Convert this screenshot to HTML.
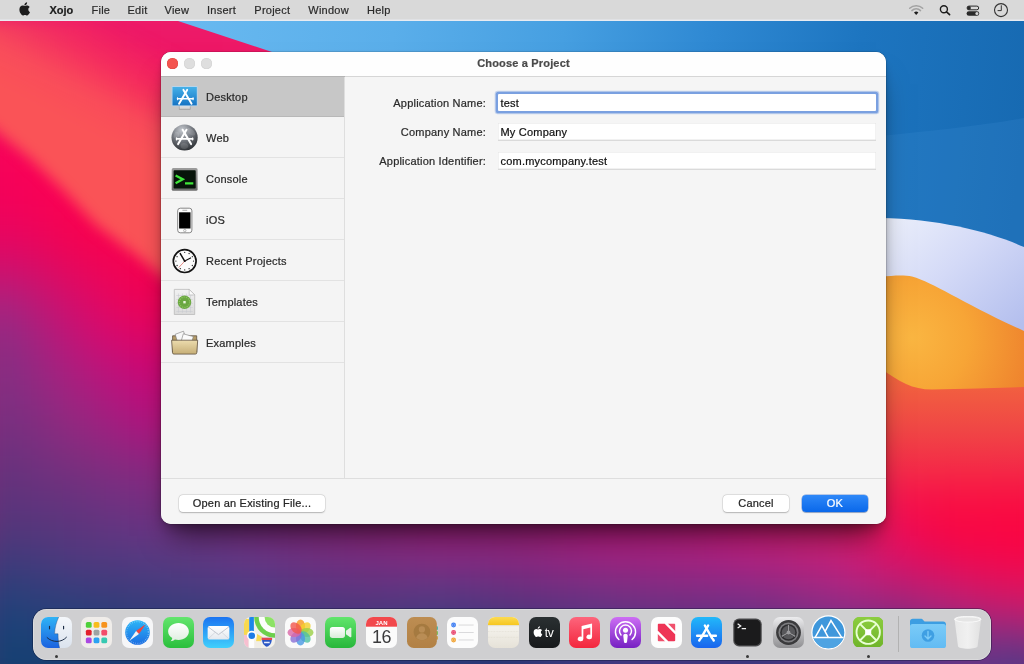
<!DOCTYPE html>
<html lang="en">
<head>
<meta charset="utf-8">
<title>Choose a Project</title>
<style>
*{box-sizing:border-box;margin:0;padding:0}
html,body{width:1024px;height:664px;overflow:hidden;background:#5a3585}
body{font-family:"Liberation Sans",sans-serif;font-size:11.5px;color:#262626;position:relative;-webkit-font-smoothing:antialiased}
#wall{position:absolute;left:0;top:0;width:1024px;height:664px;display:block}
/* ---------- menu bar ---------- */
#menubar{will-change:transform;position:absolute;left:0;top:0;width:1024px;height:20.5px;background:#d9d9d9;box-shadow:inset 0 -1.5px 0 rgba(236,240,248,.75)}
#menubar .mi{position:absolute;top:0;height:20px;line-height:20px;font-size:11px;color:#2a2a2a;white-space:nowrap}
#menubar .mi{letter-spacing:.25px;-webkit-text-stroke:.2px}#menubar .mi.b{font-weight:bold;color:#1c1c1c;letter-spacing:0}
#menubar svg{position:absolute}
/* ---------- dialog ---------- */
#dlg{will-change:transform;letter-spacing:.2px;-webkit-text-stroke:.22px;position:absolute;left:161px;top:52px;width:725px;height:472px;border-radius:10px;background:#f5f5f5;overflow:hidden;
 box-shadow:0 0 0 0.5px rgba(0,0,0,.22),0 22px 28px -10px rgba(0,0,0,.55),0 8px 14px -4px rgba(0,0,0,.25),0 1px 5px rgba(0,0,0,.12)}
#tb{position:absolute;z-index:2;left:0;top:0;width:725px;height:25px;background:#fefefe;border-bottom:1px solid #d6d6d6}
#tb .t{position:absolute;left:0;width:725px;top:0;height:24px;line-height:23px;text-align:center;font-weight:bold;font-size:11px;letter-spacing:.17px;color:#4a4a4a}
.tl{position:absolute;top:6.2px;width:10.6px;height:10.6px;border-radius:50%}
#side{position:absolute;left:0;top:24px;width:184px;height:402px;background:#f4f4f4;border-right:1px solid #dedede}
.row{position:absolute;left:0;width:183px;height:41px;border-bottom:1px solid #e2e2e2}
.row.sel{background:#c7c7c7;border-bottom-color:#b8b8b8}
#selt{position:absolute;z-index:3;left:0;top:24px;width:184px;height:1px;background:#b4b4b4}
.row span{position:absolute;left:45px;top:0;line-height:42px;font-size:11px;color:#2b2b2b;white-space:nowrap}
.row svg{position:absolute}
#main{position:absolute;left:184px;top:24px;width:541px;height:402px;background:#f5f5f5}
.lbl{position:absolute;right:400px;height:17px;line-height:17px;font-size:11px;color:#2b2b2b;white-space:nowrap;text-align:right}
.fld{position:absolute;left:336.5px;width:378px;height:16.5px;background:#fff;line-height:18.5px;font-size:11px;color:#111;padding-left:3px;white-space:nowrap;
 box-shadow:inset 0 0 0 0.5px #e4e4e4,0 1px 0 #dadada}
.fld.f{border-radius:1px;box-shadow:0 0 0 2.3px #7aa0e0,0 0 0 3.3px rgba(122,160,224,.4)}
#foot{position:absolute;left:0;top:426px;width:725px;height:46px;background:#f5f5f5;border-top:1px solid #dedede}
.btn{position:absolute;top:16px;height:17px;line-height:17px;border-radius:4px;background:#fff;text-align:center;font-size:11px;color:#262626;
 box-shadow:0 0 0 0.5px rgba(0,0,0,.12),0 .5px 1.5px rgba(0,0,0,.22)}
.btn.ok{background:linear-gradient(#2e88f8,#0a68ea);color:#fff;box-shadow:0 0 0 0.5px rgba(0,70,190,.5),0 1px 1px rgba(0,0,0,.2)}
/* ---------- dock ---------- */
#dock{position:absolute;left:33.2px;top:609px;width:957.5px;height:51px;border-radius:13.5px;background:#cfcfd1;
 box-shadow:0 0 0 0.8px rgba(10,20,50,.5),inset 0 0 0 0.6px rgba(255,255,255,.45)}
.di{position:absolute;will-change:transform}
.di svg{display:block;width:33px;height:33px}
.dot{position:absolute;top:655px;width:3px;height:3px;border-radius:50%;background:#3a3a3a}
#dsep{position:absolute;left:898px;top:616px;width:1px;height:36px;background:#b2b2b2}
</style>
</head>
<body>
<!-- WALLPAPER -->
<svg id="wall" viewBox="0 0 1024 664">
<defs>
<radialGradient id="gbase" gradientUnits="userSpaceOnUse" cx="0" cy="0" r="500" gradientTransform="translate(0 700) scale(2.5 1)">
 <stop offset="0" stop-color="#143869"/>
 <stop offset="0.2" stop-color="#203f79"/>
 <stop offset="0.36" stop-color="#503886"/>
 <stop offset="0.5" stop-color="#6e3087"/>
 <stop offset="0.68" stop-color="#9a2585"/>
 <stop offset="0.84" stop-color="#e4106a"/>
 <stop offset="1" stop-color="#f3084f"/>
</radialGradient>
<radialGradient id="gred" gradientUnits="userSpaceOnUse" cx="0" cy="0" r="1" gradientTransform="translate(1040 495) scale(330 120)">
 <stop offset="0" stop-color="#f9073f"/>
 <stop offset="0.45" stop-color="#f5104a" stop-opacity=".9"/>
 <stop offset="1" stop-color="#f5104a" stop-opacity="0"/>
</radialGradient>
<linearGradient id="gblue" gradientUnits="userSpaceOnUse" x1="180" y1="30" x2="1024" y2="120">
 <stop offset="0" stop-color="#68b9f0"/>
 <stop offset="0.25" stop-color="#5aaeea"/>
 <stop offset="0.45" stop-color="#469fe1"/>
 <stop offset="0.62" stop-color="#2f89d3"/>
 <stop offset="0.8" stop-color="#1d75c0"/>
 <stop offset="1" stop-color="#176ab2"/>
</linearGradient>
<linearGradient id="gwhite" gradientUnits="userSpaceOnUse" x1="900" y1="215" x2="1010" y2="335">
 <stop offset="0" stop-color="#eaeefb"/>
 <stop offset="0.45" stop-color="#d4daf7"/>
 <stop offset="1" stop-color="#b4bfee"/>
</linearGradient>
<radialGradient id="gor" gradientUnits="userSpaceOnUse" cx="912" cy="338" r="125">
 <stop offset="0" stop-color="#fab642"/>
 <stop offset="0.45" stop-color="#f7a536"/>
 <stop offset="1" stop-color="#ee812d"/>
</radialGradient>
<linearGradient id="gredr" gradientUnits="userSpaceOnUse" x1="0" y1="372" x2="0" y2="500">
 <stop offset="0" stop-color="#f2683e"/>
 <stop offset="0.45" stop-color="#f04645"/>
 <stop offset="1" stop-color="#f5104a" stop-opacity="0"/>
</linearGradient>
<linearGradient id="gsal" gradientUnits="userSpaceOnUse" x1="110" y1="20" x2="60" y2="115">
 <stop offset="0" stop-color="#f9535a" stop-opacity="0"/>
 <stop offset="0.35" stop-color="#f9535a" stop-opacity=".38"/>
 <stop offset="0.7" stop-color="#f9535a" stop-opacity=".9"/>
 <stop offset="1" stop-color="#fa5357" stop-opacity="1"/>
</linearGradient>
<filter id="bw" color-interpolation-filters="sRGB" x="-10%" y="-10%" width="120%" height="120%"><feGaussianBlur stdDeviation="18"/></filter>
<filter id="b30" color-interpolation-filters="sRGB" x="-50%" y="-50%" width="200%" height="200%"><feGaussianBlur stdDeviation="22"/></filter>
<filter id="b12" color-interpolation-filters="sRGB" x="-50%" y="-50%" width="200%" height="200%"><feGaussianBlur stdDeviation="7"/></filter>
</defs>
<rect width="1024" height="664" fill="#f00350"/>
<g filter="url(#bw)">
<rect x="-32" y="-32" width="33" height="33" fill="#e81e6a"/>
<rect x="0" y="-32" width="33" height="33" fill="#e91d6a"/>
<rect x="32" y="-32" width="33" height="33" fill="#ec1c69"/>
<rect x="64" y="-32" width="33" height="33" fill="#ed1c69"/>
<rect x="96" y="-32" width="33" height="33" fill="#ec1c69"/>
<rect x="128" y="-32" width="33" height="33" fill="#eb1d6b"/>
<rect x="160" y="-32" width="33" height="33" fill="#eb1e6b"/>
<rect x="192" y="-32" width="33" height="33" fill="#ec1e6b"/>
<rect x="224" y="-32" width="33" height="33" fill="#ed1e6b"/>
<rect x="256" y="-32" width="33" height="33" fill="#ed1f6b"/>
<rect x="288" y="-32" width="33" height="33" fill="#ee206b"/>
<rect x="320" y="-32" width="33" height="33" fill="#f01f69"/>
<rect x="352" y="-32" width="33" height="33" fill="#f21e67"/>
<rect x="384" y="-32" width="33" height="33" fill="#f41e65"/>
<rect x="416" y="-32" width="33" height="33" fill="#f61e63"/>
<rect x="448" y="-32" width="33" height="33" fill="#f71e62"/>
<rect x="480" y="-32" width="33" height="33" fill="#f91e60"/>
<rect x="512" y="-32" width="33" height="33" fill="#fb1f5e"/>
<rect x="544" y="-32" width="33" height="33" fill="#fc205b"/>
<rect x="576" y="-32" width="33" height="33" fill="#fe2159"/>
<rect x="608" y="-32" width="33" height="33" fill="#ff2357"/>
<rect x="640" y="-32" width="33" height="33" fill="#ff2555"/>
<rect x="672" y="-32" width="33" height="33" fill="#ff2853"/>
<rect x="704" y="-32" width="33" height="33" fill="#ff2b50"/>
<rect x="736" y="-32" width="33" height="33" fill="#ff2e4f"/>
<rect x="768" y="-32" width="33" height="33" fill="#ff314d"/>
<rect x="800" y="-32" width="33" height="33" fill="#ff354b"/>
<rect x="832" y="-32" width="33" height="33" fill="#ff394a"/>
<rect x="864" y="-32" width="33" height="33" fill="#ff3c48"/>
<rect x="896" y="-32" width="33" height="33" fill="#ff4047"/>
<rect x="928" y="-32" width="33" height="33" fill="#ff4346"/>
<rect x="960" y="-32" width="33" height="33" fill="#ff4645"/>
<rect x="992" y="-32" width="33" height="33" fill="#ff4845"/>
<rect x="1024" y="-32" width="33" height="33" fill="#ff4944"/>
<rect x="-32" y="0" width="33" height="33" fill="#e81d6a"/>
<rect x="0" y="0" width="33" height="33" fill="#ea1c69"/>
<rect x="32" y="0" width="33" height="33" fill="#ed1a68"/>
<rect x="64" y="0" width="33" height="33" fill="#ee1a67"/>
<rect x="96" y="0" width="33" height="33" fill="#ed1a68"/>
<rect x="128" y="0" width="33" height="33" fill="#ec1b6a"/>
<rect x="160" y="0" width="33" height="33" fill="#eb1c6a"/>
<rect x="192" y="0" width="33" height="33" fill="#ec1c6a"/>
<rect x="224" y="0" width="33" height="33" fill="#ed1d6a"/>
<rect x="256" y="0" width="33" height="33" fill="#ed1e6a"/>
<rect x="288" y="0" width="33" height="33" fill="#ed1f6a"/>
<rect x="320" y="0" width="33" height="33" fill="#ef1e69"/>
<rect x="352" y="0" width="33" height="33" fill="#f21d67"/>
<rect x="384" y="0" width="33" height="33" fill="#f41c65"/>
<rect x="416" y="0" width="33" height="33" fill="#f51c63"/>
<rect x="448" y="0" width="33" height="33" fill="#f71c61"/>
<rect x="480" y="0" width="33" height="33" fill="#f81d5f"/>
<rect x="512" y="0" width="33" height="33" fill="#fa1d5d"/>
<rect x="544" y="0" width="33" height="33" fill="#fc1e5b"/>
<rect x="576" y="0" width="33" height="33" fill="#fd2059"/>
<rect x="608" y="0" width="33" height="33" fill="#ff2157"/>
<rect x="640" y="0" width="33" height="33" fill="#ff2454"/>
<rect x="672" y="0" width="33" height="33" fill="#ff2652"/>
<rect x="704" y="0" width="33" height="33" fill="#ff2a50"/>
<rect x="736" y="0" width="33" height="33" fill="#ff2d4e"/>
<rect x="768" y="0" width="33" height="33" fill="#ff314c"/>
<rect x="800" y="0" width="33" height="33" fill="#ff354b"/>
<rect x="832" y="0" width="33" height="33" fill="#ff3949"/>
<rect x="864" y="0" width="33" height="33" fill="#ff3d48"/>
<rect x="896" y="0" width="33" height="33" fill="#ff4047"/>
<rect x="928" y="0" width="33" height="33" fill="#ff4346"/>
<rect x="960" y="0" width="33" height="33" fill="#ff4645"/>
<rect x="992" y="0" width="33" height="33" fill="#ff4944"/>
<rect x="1024" y="0" width="33" height="33" fill="#ff4a44"/>
<rect x="-32" y="32" width="33" height="33" fill="#ec1765"/>
<rect x="0" y="32" width="33" height="33" fill="#ee1664"/>
<rect x="32" y="32" width="33" height="33" fill="#f01564"/>
<rect x="64" y="32" width="33" height="33" fill="#f11564"/>
<rect x="96" y="32" width="33" height="33" fill="#f01564"/>
<rect x="128" y="32" width="33" height="33" fill="#ee1665"/>
<rect x="160" y="32" width="33" height="33" fill="#ee1766"/>
<rect x="192" y="32" width="33" height="33" fill="#ee1766"/>
<rect x="224" y="32" width="33" height="33" fill="#ee1867"/>
<rect x="256" y="32" width="33" height="33" fill="#ee1a68"/>
<rect x="288" y="32" width="33" height="33" fill="#ee1b68"/>
<rect x="320" y="32" width="33" height="33" fill="#f01a67"/>
<rect x="352" y="32" width="33" height="33" fill="#f21a65"/>
<rect x="384" y="32" width="33" height="33" fill="#f31964"/>
<rect x="416" y="32" width="33" height="33" fill="#f51962"/>
<rect x="448" y="32" width="33" height="33" fill="#f61961"/>
<rect x="480" y="32" width="33" height="33" fill="#f71a5f"/>
<rect x="512" y="32" width="33" height="33" fill="#f91a5d"/>
<rect x="544" y="32" width="33" height="33" fill="#fa1b5b"/>
<rect x="576" y="32" width="33" height="33" fill="#fc1d58"/>
<rect x="608" y="32" width="33" height="33" fill="#fe1f56"/>
<rect x="640" y="32" width="33" height="33" fill="#ff2154"/>
<rect x="672" y="32" width="33" height="33" fill="#ff2452"/>
<rect x="704" y="32" width="33" height="33" fill="#ff284f"/>
<rect x="736" y="32" width="33" height="33" fill="#ff2c4d"/>
<rect x="768" y="32" width="33" height="33" fill="#ff304b"/>
<rect x="800" y="32" width="33" height="33" fill="#ff344a"/>
<rect x="832" y="32" width="33" height="33" fill="#ff3948"/>
<rect x="864" y="32" width="33" height="33" fill="#ff3d47"/>
<rect x="896" y="32" width="33" height="33" fill="#ff4146"/>
<rect x="928" y="32" width="33" height="33" fill="#ff4545"/>
<rect x="960" y="32" width="33" height="33" fill="#ff4844"/>
<rect x="992" y="32" width="33" height="33" fill="#ff4a43"/>
<rect x="1024" y="32" width="33" height="33" fill="#ff4b43"/>
<rect x="-32" y="64" width="33" height="33" fill="#f2105f"/>
<rect x="0" y="64" width="33" height="33" fill="#f3105f"/>
<rect x="32" y="64" width="33" height="33" fill="#f40f5f"/>
<rect x="64" y="64" width="33" height="33" fill="#f40f5f"/>
<rect x="96" y="64" width="33" height="33" fill="#f30f5f"/>
<rect x="128" y="64" width="33" height="33" fill="#f21060"/>
<rect x="160" y="64" width="33" height="33" fill="#f11161"/>
<rect x="192" y="64" width="33" height="33" fill="#f11262"/>
<rect x="224" y="64" width="33" height="33" fill="#f11363"/>
<rect x="256" y="64" width="33" height="33" fill="#f01564"/>
<rect x="288" y="64" width="33" height="33" fill="#f11665"/>
<rect x="320" y="64" width="33" height="33" fill="#f11664"/>
<rect x="352" y="64" width="33" height="33" fill="#f21664"/>
<rect x="384" y="64" width="33" height="33" fill="#f31663"/>
<rect x="416" y="64" width="33" height="33" fill="#f41662"/>
<rect x="448" y="64" width="33" height="33" fill="#f51660"/>
<rect x="480" y="64" width="33" height="33" fill="#f6175f"/>
<rect x="512" y="64" width="33" height="33" fill="#f7175d"/>
<rect x="544" y="64" width="33" height="33" fill="#f9185a"/>
<rect x="576" y="64" width="33" height="33" fill="#fb1a58"/>
<rect x="608" y="64" width="33" height="33" fill="#fc1c55"/>
<rect x="640" y="64" width="33" height="33" fill="#fe1e53"/>
<rect x="672" y="64" width="33" height="33" fill="#ff2151"/>
<rect x="704" y="64" width="33" height="33" fill="#ff254f"/>
<rect x="736" y="64" width="33" height="33" fill="#ff2a4d"/>
<rect x="768" y="64" width="33" height="33" fill="#ff2f4b"/>
<rect x="800" y="64" width="33" height="33" fill="#ff3449"/>
<rect x="832" y="64" width="33" height="33" fill="#ff3947"/>
<rect x="864" y="64" width="33" height="33" fill="#ff3e46"/>
<rect x="896" y="64" width="33" height="33" fill="#ff4245"/>
<rect x="928" y="64" width="33" height="33" fill="#ff4644"/>
<rect x="960" y="64" width="33" height="33" fill="#ff4943"/>
<rect x="992" y="64" width="33" height="33" fill="#ff4c42"/>
<rect x="1024" y="64" width="33" height="33" fill="#ff4d42"/>
<rect x="-32" y="96" width="33" height="33" fill="#f40a5d"/>
<rect x="0" y="96" width="33" height="33" fill="#f60a5c"/>
<rect x="32" y="96" width="33" height="33" fill="#f8095b"/>
<rect x="64" y="96" width="33" height="33" fill="#f8095b"/>
<rect x="96" y="96" width="33" height="33" fill="#f7095b"/>
<rect x="128" y="96" width="33" height="33" fill="#f60a5c"/>
<rect x="160" y="96" width="33" height="33" fill="#f40b5d"/>
<rect x="192" y="96" width="33" height="33" fill="#f40d5f"/>
<rect x="832" y="96" width="33" height="33" fill="#ff3946"/>
<rect x="864" y="96" width="33" height="33" fill="#ff3f45"/>
<rect x="896" y="96" width="33" height="33" fill="#ff4443"/>
<rect x="928" y="96" width="33" height="33" fill="#ff4843"/>
<rect x="960" y="96" width="33" height="33" fill="#ff4c42"/>
<rect x="992" y="96" width="33" height="33" fill="#ff4e41"/>
<rect x="1024" y="96" width="33" height="33" fill="#ff4f41"/>
<rect x="-32" y="128" width="33" height="33" fill="#f6055b"/>
<rect x="0" y="128" width="33" height="33" fill="#f80459"/>
<rect x="32" y="128" width="33" height="33" fill="#fa0458"/>
<rect x="64" y="128" width="33" height="33" fill="#fa0557"/>
<rect x="96" y="128" width="33" height="33" fill="#f90557"/>
<rect x="128" y="128" width="33" height="33" fill="#f80459"/>
<rect x="160" y="128" width="33" height="33" fill="#f7065a"/>
<rect x="192" y="128" width="33" height="33" fill="#f6085c"/>
<rect x="832" y="128" width="33" height="33" fill="#ff3a45"/>
<rect x="864" y="128" width="33" height="33" fill="#ff4044"/>
<rect x="896" y="128" width="33" height="33" fill="#ff4642"/>
<rect x="928" y="128" width="33" height="33" fill="#ff4a41"/>
<rect x="960" y="128" width="33" height="33" fill="#ff4e41"/>
<rect x="992" y="128" width="33" height="33" fill="#ff5140"/>
<rect x="1024" y="128" width="33" height="33" fill="#ff5240"/>
<rect x="-32" y="160" width="33" height="33" fill="#f3035a"/>
<rect x="0" y="160" width="33" height="33" fill="#f70258"/>
<rect x="32" y="160" width="33" height="33" fill="#fa0256"/>
<rect x="64" y="160" width="33" height="33" fill="#fb0254"/>
<rect x="96" y="160" width="33" height="33" fill="#fb0254"/>
<rect x="128" y="160" width="33" height="33" fill="#fa0255"/>
<rect x="160" y="160" width="33" height="33" fill="#f80357"/>
<rect x="192" y="160" width="33" height="33" fill="#f80558"/>
<rect x="832" y="160" width="33" height="33" fill="#ff3b44"/>
<rect x="864" y="160" width="33" height="33" fill="#ff4243"/>
<rect x="896" y="160" width="33" height="33" fill="#ff4841"/>
<rect x="928" y="160" width="33" height="33" fill="#ff4d40"/>
<rect x="960" y="160" width="33" height="33" fill="#ff5140"/>
<rect x="992" y="160" width="33" height="33" fill="#ff543f"/>
<rect x="1024" y="160" width="33" height="33" fill="#ff543f"/>
<rect x="-32" y="192" width="33" height="33" fill="#ef035c"/>
<rect x="0" y="192" width="33" height="33" fill="#f2025a"/>
<rect x="32" y="192" width="33" height="33" fill="#f60255"/>
<rect x="64" y="192" width="33" height="33" fill="#f90151"/>
<rect x="96" y="192" width="33" height="33" fill="#fa0151"/>
<rect x="128" y="192" width="33" height="33" fill="#fa0152"/>
<rect x="160" y="192" width="33" height="33" fill="#f90254"/>
<rect x="192" y="192" width="33" height="33" fill="#f80356"/>
<rect x="832" y="192" width="33" height="33" fill="#fe3c44"/>
<rect x="864" y="192" width="33" height="33" fill="#ff4442"/>
<rect x="896" y="192" width="33" height="33" fill="#ff4b40"/>
<rect x="928" y="192" width="33" height="33" fill="#ff513f"/>
<rect x="960" y="192" width="33" height="33" fill="#ff543f"/>
<rect x="992" y="192" width="33" height="33" fill="#fe573f"/>
<rect x="1024" y="192" width="33" height="33" fill="#fe573f"/>
<rect x="-32" y="224" width="33" height="33" fill="#e20763"/>
<rect x="0" y="224" width="33" height="33" fill="#e60660"/>
<rect x="32" y="224" width="33" height="33" fill="#ec055a"/>
<rect x="64" y="224" width="33" height="33" fill="#f40350"/>
<rect x="96" y="224" width="33" height="33" fill="#f70251"/>
<rect x="128" y="224" width="33" height="33" fill="#f80150"/>
<rect x="160" y="224" width="33" height="33" fill="#f80152"/>
<rect x="192" y="224" width="33" height="33" fill="#f70255"/>
<rect x="832" y="224" width="33" height="33" fill="#fd3e43"/>
<rect x="864" y="224" width="33" height="33" fill="#fd4741"/>
<rect x="896" y="224" width="33" height="33" fill="#fd4f40"/>
<rect x="928" y="224" width="33" height="33" fill="#fd553f"/>
<rect x="960" y="224" width="33" height="33" fill="#fd583e"/>
<rect x="992" y="224" width="33" height="33" fill="#fc5a3e"/>
<rect x="1024" y="224" width="33" height="33" fill="#fc5b3e"/>
<rect x="-32" y="256" width="33" height="33" fill="#c91271"/>
<rect x="0" y="256" width="33" height="33" fill="#ce116e"/>
<rect x="32" y="256" width="33" height="33" fill="#da0c65"/>
<rect x="64" y="256" width="33" height="33" fill="#e7075d"/>
<rect x="96" y="256" width="33" height="33" fill="#ef0456"/>
<rect x="128" y="256" width="33" height="33" fill="#f30251"/>
<rect x="160" y="256" width="33" height="33" fill="#f40252"/>
<rect x="192" y="256" width="33" height="33" fill="#f30256"/>
<rect x="832" y="256" width="33" height="33" fill="#fb4043"/>
<rect x="864" y="256" width="33" height="33" fill="#fb4a41"/>
<rect x="896" y="256" width="33" height="33" fill="#fc533f"/>
<rect x="928" y="256" width="33" height="33" fill="#fb593e"/>
<rect x="960" y="256" width="33" height="33" fill="#fb5d3d"/>
<rect x="992" y="256" width="33" height="33" fill="#fb5e3d"/>
<rect x="1024" y="256" width="33" height="33" fill="#fa5e3d"/>
<rect x="-32" y="288" width="33" height="33" fill="#a52581"/>
<rect x="0" y="288" width="33" height="33" fill="#ae207d"/>
<rect x="32" y="288" width="33" height="33" fill="#c41573"/>
<rect x="64" y="288" width="33" height="33" fill="#d70c6a"/>
<rect x="96" y="288" width="33" height="33" fill="#e60660"/>
<rect x="128" y="288" width="33" height="33" fill="#ec0457"/>
<rect x="160" y="288" width="33" height="33" fill="#ed0357"/>
<rect x="192" y="288" width="33" height="33" fill="#ed035a"/>
<rect x="832" y="288" width="33" height="33" fill="#f94243"/>
<rect x="864" y="288" width="33" height="33" fill="#f94e40"/>
<rect x="896" y="288" width="33" height="33" fill="#f9583e"/>
<rect x="928" y="288" width="33" height="33" fill="#f95e3d"/>
<rect x="960" y="288" width="33" height="33" fill="#f9613d"/>
<rect x="992" y="288" width="33" height="33" fill="#f9613d"/>
<rect x="1024" y="288" width="33" height="33" fill="#f8613d"/>
<rect x="-32" y="320" width="33" height="33" fill="#8c2c84"/>
<rect x="0" y="320" width="33" height="33" fill="#962882"/>
<rect x="32" y="320" width="33" height="33" fill="#af1d7c"/>
<rect x="64" y="320" width="33" height="33" fill="#c61275"/>
<rect x="96" y="320" width="33" height="33" fill="#d7096e"/>
<rect x="128" y="320" width="33" height="33" fill="#de0666"/>
<rect x="160" y="320" width="33" height="33" fill="#e20562"/>
<rect x="192" y="320" width="33" height="33" fill="#e30563"/>
<rect x="832" y="320" width="33" height="33" fill="#f74543"/>
<rect x="864" y="320" width="33" height="33" fill="#f75340"/>
<rect x="896" y="320" width="33" height="33" fill="#f75d3e"/>
<rect x="928" y="320" width="33" height="33" fill="#f7633d"/>
<rect x="960" y="320" width="33" height="33" fill="#f7653c"/>
<rect x="992" y="320" width="33" height="33" fill="#f6643c"/>
<rect x="1024" y="320" width="33" height="33" fill="#f6633d"/>
<rect x="-32" y="352" width="33" height="33" fill="#832f82"/>
<rect x="0" y="352" width="33" height="33" fill="#8b2c82"/>
<rect x="32" y="352" width="33" height="33" fill="#9f2480"/>
<rect x="64" y="352" width="33" height="33" fill="#b11b7d"/>
<rect x="96" y="352" width="33" height="33" fill="#c11179"/>
<rect x="128" y="352" width="33" height="33" fill="#c90877"/>
<rect x="160" y="352" width="33" height="33" fill="#d10771"/>
<rect x="192" y="352" width="33" height="33" fill="#d5086d"/>
<rect x="832" y="352" width="33" height="33" fill="#f64644"/>
<rect x="864" y="352" width="33" height="33" fill="#f55641"/>
<rect x="896" y="352" width="33" height="33" fill="#f4613f"/>
<rect x="928" y="352" width="33" height="33" fill="#f4653d"/>
<rect x="960" y="352" width="33" height="33" fill="#f5673c"/>
<rect x="992" y="352" width="33" height="33" fill="#f4663c"/>
<rect x="1024" y="352" width="33" height="33" fill="#f4633d"/>
<rect x="-32" y="384" width="33" height="33" fill="#7c3081"/>
<rect x="0" y="384" width="33" height="33" fill="#812e81"/>
<rect x="32" y="384" width="33" height="33" fill="#912980"/>
<rect x="64" y="384" width="33" height="33" fill="#a1227f"/>
<rect x="96" y="384" width="33" height="33" fill="#ae187e"/>
<rect x="128" y="384" width="33" height="33" fill="#b9107c"/>
<rect x="160" y="384" width="33" height="33" fill="#c00e79"/>
<rect x="192" y="384" width="33" height="33" fill="#c50e75"/>
<rect x="832" y="384" width="33" height="33" fill="#f44246"/>
<rect x="864" y="384" width="33" height="33" fill="#f25543"/>
<rect x="896" y="384" width="33" height="33" fill="#f16040"/>
<rect x="928" y="384" width="33" height="33" fill="#f35f3f"/>
<rect x="960" y="384" width="33" height="33" fill="#f3623e"/>
<rect x="992" y="384" width="33" height="33" fill="#f2633e"/>
<rect x="1024" y="384" width="33" height="33" fill="#f25c3f"/>
<rect x="-32" y="416" width="33" height="33" fill="#72307f"/>
<rect x="0" y="416" width="33" height="33" fill="#772f7f"/>
<rect x="32" y="416" width="33" height="33" fill="#832d7f"/>
<rect x="64" y="416" width="33" height="33" fill="#90297f"/>
<rect x="96" y="416" width="33" height="33" fill="#9b217f"/>
<rect x="128" y="416" width="33" height="33" fill="#a6197f"/>
<rect x="160" y="416" width="33" height="33" fill="#ad177d"/>
<rect x="192" y="416" width="33" height="33" fill="#b3167b"/>
<rect x="832" y="416" width="33" height="33" fill="#f2384a"/>
<rect x="864" y="416" width="33" height="33" fill="#f14647"/>
<rect x="896" y="416" width="33" height="33" fill="#f14d44"/>
<rect x="928" y="416" width="33" height="33" fill="#f34b43"/>
<rect x="960" y="416" width="33" height="33" fill="#f24c43"/>
<rect x="992" y="416" width="33" height="33" fill="#f14b43"/>
<rect x="1024" y="416" width="33" height="33" fill="#f14843"/>
<rect x="-32" y="448" width="33" height="33" fill="#67327d"/>
<rect x="0" y="448" width="33" height="33" fill="#6b317d"/>
<rect x="32" y="448" width="33" height="33" fill="#74307e"/>
<rect x="64" y="448" width="33" height="33" fill="#7c2e7e"/>
<rect x="96" y="448" width="33" height="33" fill="#852a7f"/>
<rect x="128" y="448" width="33" height="33" fill="#8b2780"/>
<rect x="160" y="448" width="33" height="33" fill="#952380"/>
<rect x="192" y="448" width="33" height="33" fill="#9e207f"/>
<rect x="832" y="448" width="33" height="33" fill="#f02a51"/>
<rect x="864" y="448" width="33" height="33" fill="#f22f4c"/>
<rect x="896" y="448" width="33" height="33" fill="#f33148"/>
<rect x="928" y="448" width="33" height="33" fill="#f42e46"/>
<rect x="960" y="448" width="33" height="33" fill="#f42e46"/>
<rect x="992" y="448" width="33" height="33" fill="#f32d47"/>
<rect x="1024" y="448" width="33" height="33" fill="#f32d47"/>
<rect x="-32" y="480" width="33" height="33" fill="#5d347b"/>
<rect x="0" y="480" width="33" height="33" fill="#60337c"/>
<rect x="32" y="480" width="33" height="33" fill="#65337d"/>
<rect x="64" y="480" width="33" height="33" fill="#6b327e"/>
<rect x="96" y="480" width="33" height="33" fill="#723080"/>
<rect x="128" y="480" width="33" height="33" fill="#782e81"/>
<rect x="160" y="480" width="33" height="33" fill="#802c82"/>
<rect x="192" y="480" width="33" height="33" fill="#882983"/>
<rect x="224" y="480" width="33" height="33" fill="#902783"/>
<rect x="256" y="480" width="33" height="33" fill="#982482"/>
<rect x="288" y="480" width="33" height="33" fill="#9e227f"/>
<rect x="320" y="480" width="33" height="33" fill="#a3207d"/>
<rect x="352" y="480" width="33" height="33" fill="#a71f7c"/>
<rect x="384" y="480" width="33" height="33" fill="#ac1d7c"/>
<rect x="416" y="480" width="33" height="33" fill="#b01b7b"/>
<rect x="448" y="480" width="33" height="33" fill="#b31a7a"/>
<rect x="480" y="480" width="33" height="33" fill="#b51979"/>
<rect x="512" y="480" width="33" height="33" fill="#b81879"/>
<rect x="544" y="480" width="33" height="33" fill="#be1779"/>
<rect x="576" y="480" width="33" height="33" fill="#c51579"/>
<rect x="608" y="480" width="33" height="33" fill="#c91577"/>
<rect x="640" y="480" width="33" height="33" fill="#cc1675"/>
<rect x="672" y="480" width="33" height="33" fill="#d11673"/>
<rect x="704" y="480" width="33" height="33" fill="#d81770"/>
<rect x="736" y="480" width="33" height="33" fill="#de186b"/>
<rect x="768" y="480" width="33" height="33" fill="#e11b66"/>
<rect x="800" y="480" width="33" height="33" fill="#e41e61"/>
<rect x="832" y="480" width="33" height="33" fill="#ea1e5b"/>
<rect x="864" y="480" width="33" height="33" fill="#f01a52"/>
<rect x="896" y="480" width="33" height="33" fill="#f6144a"/>
<rect x="928" y="480" width="33" height="33" fill="#f71247"/>
<rect x="960" y="480" width="33" height="33" fill="#f91344"/>
<rect x="992" y="480" width="33" height="33" fill="#f81244"/>
<rect x="1024" y="480" width="33" height="33" fill="#f71246"/>
<rect x="-32" y="512" width="33" height="33" fill="#52367a"/>
<rect x="0" y="512" width="33" height="33" fill="#54367b"/>
<rect x="32" y="512" width="33" height="33" fill="#57367c"/>
<rect x="64" y="512" width="33" height="33" fill="#5c357d"/>
<rect x="96" y="512" width="33" height="33" fill="#623580"/>
<rect x="128" y="512" width="33" height="33" fill="#673482"/>
<rect x="160" y="512" width="33" height="33" fill="#6d3383"/>
<rect x="192" y="512" width="33" height="33" fill="#733285"/>
<rect x="224" y="512" width="33" height="33" fill="#7a3087"/>
<rect x="256" y="512" width="33" height="33" fill="#802d85"/>
<rect x="288" y="512" width="33" height="33" fill="#862b82"/>
<rect x="320" y="512" width="33" height="33" fill="#8b2880"/>
<rect x="352" y="512" width="33" height="33" fill="#90267f"/>
<rect x="384" y="512" width="33" height="33" fill="#96247f"/>
<rect x="416" y="512" width="33" height="33" fill="#9e217f"/>
<rect x="448" y="512" width="33" height="33" fill="#9e217f"/>
<rect x="480" y="512" width="33" height="33" fill="#9f217d"/>
<rect x="512" y="512" width="33" height="33" fill="#a3207d"/>
<rect x="544" y="512" width="33" height="33" fill="#aa1e7d"/>
<rect x="576" y="512" width="33" height="33" fill="#b51b7f"/>
<rect x="608" y="512" width="33" height="33" fill="#b71b7e"/>
<rect x="640" y="512" width="33" height="33" fill="#b91c7c"/>
<rect x="672" y="512" width="33" height="33" fill="#bd1c7b"/>
<rect x="704" y="512" width="33" height="33" fill="#c71a79"/>
<rect x="736" y="512" width="33" height="33" fill="#ce1a77"/>
<rect x="768" y="512" width="33" height="33" fill="#cf1d73"/>
<rect x="800" y="512" width="33" height="33" fill="#d41d6f"/>
<rect x="832" y="512" width="33" height="33" fill="#dd1b69"/>
<rect x="864" y="512" width="33" height="33" fill="#e8135e"/>
<rect x="896" y="512" width="33" height="33" fill="#f30950"/>
<rect x="928" y="512" width="33" height="33" fill="#f80643"/>
<rect x="960" y="512" width="33" height="33" fill="#fa0643"/>
<rect x="992" y="512" width="33" height="33" fill="#fb0541"/>
<rect x="1024" y="512" width="33" height="33" fill="#fa0540"/>
<rect x="-32" y="544" width="33" height="33" fill="#40397a"/>
<rect x="0" y="544" width="33" height="33" fill="#423a7b"/>
<rect x="32" y="544" width="33" height="33" fill="#473a7d"/>
<rect x="64" y="544" width="33" height="33" fill="#51397f"/>
<rect x="96" y="544" width="33" height="33" fill="#51397f"/>
<rect x="128" y="544" width="33" height="33" fill="#553a81"/>
<rect x="160" y="544" width="33" height="33" fill="#5a3a82"/>
<rect x="192" y="544" width="33" height="33" fill="#5e3984"/>
<rect x="224" y="544" width="33" height="33" fill="#643886"/>
<rect x="256" y="544" width="33" height="33" fill="#693585"/>
<rect x="288" y="544" width="33" height="33" fill="#6d3282"/>
<rect x="320" y="544" width="33" height="33" fill="#723081"/>
<rect x="352" y="544" width="33" height="33" fill="#762e80"/>
<rect x="384" y="544" width="33" height="33" fill="#7b2e81"/>
<rect x="416" y="544" width="33" height="33" fill="#802d82"/>
<rect x="448" y="544" width="33" height="33" fill="#812c81"/>
<rect x="480" y="544" width="33" height="33" fill="#832a80"/>
<rect x="512" y="544" width="33" height="33" fill="#88287f"/>
<rect x="544" y="544" width="33" height="33" fill="#8f2780"/>
<rect x="576" y="544" width="33" height="33" fill="#972581"/>
<rect x="608" y="544" width="33" height="33" fill="#9b2581"/>
<rect x="640" y="544" width="33" height="33" fill="#9d2481"/>
<rect x="672" y="544" width="33" height="33" fill="#a12481"/>
<rect x="704" y="544" width="33" height="33" fill="#a72382"/>
<rect x="736" y="544" width="33" height="33" fill="#ad2381"/>
<rect x="768" y="544" width="33" height="33" fill="#b3237e"/>
<rect x="800" y="544" width="33" height="33" fill="#bc227c"/>
<rect x="832" y="544" width="33" height="33" fill="#c71f7b"/>
<rect x="864" y="544" width="33" height="33" fill="#d2176e"/>
<rect x="896" y="544" width="33" height="33" fill="#dd1062"/>
<rect x="928" y="544" width="33" height="33" fill="#e60c58"/>
<rect x="960" y="544" width="33" height="33" fill="#f00950"/>
<rect x="992" y="544" width="33" height="33" fill="#f3084d"/>
<rect x="1024" y="544" width="33" height="33" fill="#f4094b"/>
<rect x="-32" y="576" width="33" height="33" fill="#2a3e7a"/>
<rect x="0" y="576" width="33" height="33" fill="#2d3f7a"/>
<rect x="32" y="576" width="33" height="33" fill="#333e7b"/>
<rect x="64" y="576" width="33" height="33" fill="#373e7c"/>
<rect x="96" y="576" width="33" height="33" fill="#3c3c7c"/>
<rect x="128" y="576" width="33" height="33" fill="#403c7d"/>
<rect x="160" y="576" width="33" height="33" fill="#443c7e"/>
<rect x="192" y="576" width="33" height="33" fill="#483c80"/>
<rect x="224" y="576" width="33" height="33" fill="#4b3d81"/>
<rect x="256" y="576" width="33" height="33" fill="#503a81"/>
<rect x="288" y="576" width="33" height="33" fill="#55377f"/>
<rect x="320" y="576" width="33" height="33" fill="#59357f"/>
<rect x="352" y="576" width="33" height="33" fill="#5c357f"/>
<rect x="384" y="576" width="33" height="33" fill="#5d3580"/>
<rect x="416" y="576" width="33" height="33" fill="#5d3882"/>
<rect x="448" y="576" width="33" height="33" fill="#5f3581"/>
<rect x="480" y="576" width="33" height="33" fill="#63327f"/>
<rect x="512" y="576" width="33" height="33" fill="#68307f"/>
<rect x="544" y="576" width="33" height="33" fill="#6e3081"/>
<rect x="576" y="576" width="33" height="33" fill="#733183"/>
<rect x="608" y="576" width="33" height="33" fill="#792f83"/>
<rect x="640" y="576" width="33" height="33" fill="#7d2d83"/>
<rect x="672" y="576" width="33" height="33" fill="#802c83"/>
<rect x="704" y="576" width="33" height="33" fill="#822c85"/>
<rect x="736" y="576" width="33" height="33" fill="#872c85"/>
<rect x="768" y="576" width="33" height="33" fill="#902b83"/>
<rect x="800" y="576" width="33" height="33" fill="#9a2983"/>
<rect x="832" y="576" width="33" height="33" fill="#a72783"/>
<rect x="864" y="576" width="33" height="33" fill="#ac237b"/>
<rect x="896" y="576" width="33" height="33" fill="#b61f75"/>
<rect x="928" y="576" width="33" height="33" fill="#c51d72"/>
<rect x="960" y="576" width="33" height="33" fill="#cf1869"/>
<rect x="992" y="576" width="33" height="33" fill="#d91563"/>
<rect x="1024" y="576" width="33" height="33" fill="#dc1561"/>
<rect x="-32" y="608" width="33" height="33" fill="#1c4179"/>
<rect x="0" y="608" width="33" height="33" fill="#1e4279"/>
<rect x="32" y="608" width="33" height="33" fill="#234178"/>
<rect x="64" y="608" width="33" height="33" fill="#253e77"/>
<rect x="96" y="608" width="33" height="33" fill="#293c77"/>
<rect x="128" y="608" width="33" height="33" fill="#2d3c78"/>
<rect x="160" y="608" width="33" height="33" fill="#303c79"/>
<rect x="192" y="608" width="33" height="33" fill="#333c79"/>
<rect x="224" y="608" width="33" height="33" fill="#353c79"/>
<rect x="256" y="608" width="33" height="33" fill="#393a79"/>
<rect x="288" y="608" width="33" height="33" fill="#3d397a"/>
<rect x="320" y="608" width="33" height="33" fill="#41387b"/>
<rect x="352" y="608" width="33" height="33" fill="#43387c"/>
<rect x="384" y="608" width="33" height="33" fill="#433a7d"/>
<rect x="416" y="608" width="33" height="33" fill="#413b7e"/>
<rect x="448" y="608" width="33" height="33" fill="#41397d"/>
<rect x="480" y="608" width="33" height="33" fill="#43377c"/>
<rect x="512" y="608" width="33" height="33" fill="#49357c"/>
<rect x="544" y="608" width="33" height="33" fill="#50357e"/>
<rect x="576" y="608" width="33" height="33" fill="#553681"/>
<rect x="608" y="608" width="33" height="33" fill="#593582"/>
<rect x="640" y="608" width="33" height="33" fill="#5d3382"/>
<rect x="672" y="608" width="33" height="33" fill="#5e3282"/>
<rect x="704" y="608" width="33" height="33" fill="#5e3383"/>
<rect x="736" y="608" width="33" height="33" fill="#613383"/>
<rect x="768" y="608" width="33" height="33" fill="#693183"/>
<rect x="800" y="608" width="33" height="33" fill="#733185"/>
<rect x="832" y="608" width="33" height="33" fill="#7a3085"/>
<rect x="864" y="608" width="33" height="33" fill="#7b2f83"/>
<rect x="896" y="608" width="33" height="33" fill="#822d80"/>
<rect x="928" y="608" width="33" height="33" fill="#922b7f"/>
<rect x="960" y="608" width="33" height="33" fill="#9d287c"/>
<rect x="992" y="608" width="33" height="33" fill="#a5267a"/>
<rect x="1024" y="608" width="33" height="33" fill="#a72779"/>
<rect x="-32" y="640" width="33" height="33" fill="#174073"/>
<rect x="0" y="640" width="33" height="33" fill="#174173"/>
<rect x="32" y="640" width="33" height="33" fill="#183f72"/>
<rect x="64" y="640" width="33" height="33" fill="#193c71"/>
<rect x="96" y="640" width="33" height="33" fill="#1a3b71"/>
<rect x="128" y="640" width="33" height="33" fill="#1d3b72"/>
<rect x="160" y="640" width="33" height="33" fill="#203b73"/>
<rect x="192" y="640" width="33" height="33" fill="#213a72"/>
<rect x="224" y="640" width="33" height="33" fill="#213870"/>
<rect x="256" y="640" width="33" height="33" fill="#253872"/>
<rect x="288" y="640" width="33" height="33" fill="#293975"/>
<rect x="320" y="640" width="33" height="33" fill="#2c3a77"/>
<rect x="352" y="640" width="33" height="33" fill="#2d3a78"/>
<rect x="384" y="640" width="33" height="33" fill="#2d3b79"/>
<rect x="416" y="640" width="33" height="33" fill="#2c3b79"/>
<rect x="448" y="640" width="33" height="33" fill="#2a3977"/>
<rect x="480" y="640" width="33" height="33" fill="#273774"/>
<rect x="512" y="640" width="33" height="33" fill="#2e3777"/>
<rect x="544" y="640" width="33" height="33" fill="#36387b"/>
<rect x="576" y="640" width="33" height="33" fill="#3b387e"/>
<rect x="608" y="640" width="33" height="33" fill="#3f387f"/>
<rect x="640" y="640" width="33" height="33" fill="#403780"/>
<rect x="672" y="640" width="33" height="33" fill="#40377f"/>
<rect x="704" y="640" width="33" height="33" fill="#3d377e"/>
<rect x="736" y="640" width="33" height="33" fill="#3a377c"/>
<rect x="768" y="640" width="33" height="33" fill="#453780"/>
<rect x="800" y="640" width="33" height="33" fill="#4e3784"/>
<rect x="832" y="640" width="33" height="33" fill="#513786"/>
<rect x="864" y="640" width="33" height="33" fill="#4d3986"/>
<rect x="896" y="640" width="33" height="33" fill="#503986"/>
<rect x="928" y="640" width="33" height="33" fill="#603686"/>
<rect x="960" y="640" width="33" height="33" fill="#663485"/>
<rect x="992" y="640" width="33" height="33" fill="#613686"/>
<rect x="1024" y="640" width="33" height="33" fill="#5d3785"/>
<rect x="-32" y="672" width="33" height="33" fill="#163c70"/>
<rect x="0" y="672" width="33" height="33" fill="#153f71"/>
<rect x="32" y="672" width="33" height="33" fill="#163e71"/>
<rect x="64" y="672" width="33" height="33" fill="#163c70"/>
<rect x="96" y="672" width="33" height="33" fill="#173b70"/>
<rect x="128" y="672" width="33" height="33" fill="#1a3b71"/>
<rect x="160" y="672" width="33" height="33" fill="#1c3a72"/>
<rect x="192" y="672" width="33" height="33" fill="#1d3971"/>
<rect x="224" y="672" width="33" height="33" fill="#1d376e"/>
<rect x="256" y="672" width="33" height="33" fill="#203870"/>
<rect x="288" y="672" width="33" height="33" fill="#253974"/>
<rect x="320" y="672" width="33" height="33" fill="#273a76"/>
<rect x="352" y="672" width="33" height="33" fill="#293a77"/>
<rect x="384" y="672" width="33" height="33" fill="#283b78"/>
<rect x="416" y="672" width="33" height="33" fill="#273b78"/>
<rect x="448" y="672" width="33" height="33" fill="#253976"/>
<rect x="480" y="672" width="33" height="33" fill="#233671"/>
<rect x="512" y="672" width="33" height="33" fill="#293776"/>
<rect x="544" y="672" width="33" height="33" fill="#30387a"/>
<rect x="576" y="672" width="33" height="33" fill="#35397d"/>
<rect x="608" y="672" width="33" height="33" fill="#39397f"/>
<rect x="640" y="672" width="33" height="33" fill="#3a387f"/>
<rect x="672" y="672" width="33" height="33" fill="#39387f"/>
<rect x="704" y="672" width="33" height="33" fill="#36387d"/>
<rect x="736" y="672" width="33" height="33" fill="#31387a"/>
<rect x="768" y="672" width="33" height="33" fill="#3d3880"/>
<rect x="800" y="672" width="33" height="33" fill="#453883"/>
<rect x="832" y="672" width="33" height="33" fill="#483986"/>
<rect x="864" y="672" width="33" height="33" fill="#463a86"/>
<rect x="896" y="672" width="33" height="33" fill="#483a87"/>
<rect x="928" y="672" width="33" height="33" fill="#563887"/>
<rect x="960" y="672" width="33" height="33" fill="#5b3787"/>
<rect x="992" y="672" width="33" height="33" fill="#533987"/>
<rect x="1024" y="672" width="33" height="33" fill="#473b85"/>
</g>
<!-- salmon band -->
<path d="M-40,20 L330,20 L330,420 L300,400 C250,350 200,300 161,275 C130,250 110,236 95,224 L63,190 L32,160 L0,134 L-40,100 Z" fill="url(#gsal)" filter="url(#b12)"/>
<!-- right red top edge -->
<path d="M880,366 L880,368 C900,382 912,389.5 932,389.5 L1024,387 L1024,470 L880,470 Z" fill="url(#gredr)"/>
<!-- blue -->
<path d="M175,20 L272,52 C480,120 720,215 880,221 C940,222 990,235 1024,250 L1024,0 L175,0 Z" fill="url(#gblue)"/>
<path d="M880,136 C930,131 980,126 1024,118 L1024,252 L880,224 Z" fill="#3f93d8" fill-opacity=".2"/>
<!-- white band -->
<path d="M880,218 C940,219 990,232 1024,247 L1024,345 L880,300 Z" fill="url(#gwhite)"/>
<!-- orange band -->
<path d="M880,277 C895,275 905,275 912,276.5 C935,283 960,302 1024,331 L1024,387 L977,388.6 L932,389.5 C912,389.5 900,382 880,368 Z" fill="url(#gor)"/>
</svg>

<!-- MENU BAR -->
<div id="menubar">
 <svg style="left:18px;top:2px" width="13" height="15" viewBox="0 0 13 15"><path fill="#1d1d1d" d="M9.1,0.2c0.1,0.8-0.2,1.6-0.7,2.2C7.9,3,7.1,3.4,6.4,3.4C6.3,2.6,6.7,1.8,7.1,1.3C7.6,0.7,8.5,0.3,9.1,0.2z M11.7,5.1c-0.1,0.1-1.4,0.8-1.4,2.4c0,1.9,1.7,2.5,1.7,2.5c0,0-0.3,0.9-0.9,1.8c-0.5,0.8-1.1,1.6-2,1.6c-0.9,0-1.1-0.5-2.1-0.5c-1,0-1.3,0.5-2.1,0.5c-0.8,0-1.4-0.7-2-1.6C2,10.7,1.4,9,1.4,7.4c0-2.6,1.7-3.9,3.3-3.9c0.9,0,1.6,0.6,2.1,0.6c0.5,0,1.3-0.6,2.3-0.6C9.5,3.5,10.8,3.5,11.7,5.1z"/></svg>
<svg style="left:900px;top:0" width="120" height="20" viewBox="900 0 120 20">
  <g fill="none" stroke="#a2a2a2" stroke-width="1.5" stroke-linecap="round">
   <path d="M909.7,8.3a9.3,9.3 0 0 1 13,0"/><path d="M911.9,10.6a6.2,6.2 0 0 1 8.6,0"/>
  </g>
  <path d="M914,12.6a3.2,3.2 0 0 1 4.4,0L916.2,14.9z" fill="#1e1e1e"/>
  <circle cx="943.9" cy="9.2" r="3.5" fill="none" stroke="#1c1c1c" stroke-width="1.4"/><path d="M946.5,11.8L949.6,14.7" stroke="#1c1c1c" stroke-width="1.6" stroke-linecap="round"/>
  <rect x="967.1" y="6.1" width="11.6" height="3.7" rx="1.85" fill="none" stroke="#2a2a2a" stroke-width="1"/><circle cx="969" cy="7.95" r="1.9" fill="#2a2a2a"/>
  <rect x="966.6" y="11.3" width="12.6" height="4.5" rx="2.25" fill="#2a2a2a"/><circle cx="976.9" cy="13.55" r="1.5" fill="#d7d7d7"/>
  <circle cx="1001" cy="10.1" r="6.5" fill="none" stroke="#333" stroke-width="1.1"/><path d="M1001.3,5.3V10.6H997.6" fill="none" stroke="#333" stroke-width="1"/>
 </svg>
 <div class="mi b" style="left:49.5px">Xojo</div>
 <div class="mi" style="left:91.5px">File</div>
 <div class="mi" style="left:127.5px">Edit</div>
 <div class="mi" style="left:164.5px">View</div>
 <div class="mi" style="left:207px">Insert</div>
 <div class="mi" style="left:254.3px">Project</div>
 <div class="mi" style="left:308.3px">Window</div>
 <div class="mi" style="left:367px">Help</div>
</div>

<!-- DIALOG -->
<div id="dlg">
 <div id="tb">
  <div class="tl" style="left:6.2px;background:#f4544f;box-shadow:inset 0 0 0 .5px #de4640"></div>
  <div class="tl" style="left:23.2px;background:#dedede;box-shadow:inset 0 0 0 .5px #d2d2d2"></div>
  <div class="tl" style="left:40.3px;background:#dedede;box-shadow:inset 0 0 0 .5px #d2d2d2"></div>
  <div class="t">Choose a Project</div>
 </div>
 <div id="selt"></div>
 <div id="side">
  <div class="row sel" style="top:0"><svg width="48" height="41" viewBox="0 0 48 41" style="left:0;top:0"><defs><linearGradient id="gsd" x1="0" y1="0" x2="0" y2="1"><stop offset="0" stop-color="#44b0e8"/><stop offset="1" stop-color="#1674c4"/></linearGradient><linearGradient id="gsd2" x1="0" y1="0" x2="0" y2="1"><stop offset="0" stop-color="#f2f2f2"/><stop offset="1" stop-color="#bdbdbd"/></linearGradient></defs><rect x="18.2" y="29.8" width="11" height="3.6" fill="url(#gsd2)" stroke="#9a9a9a" stroke-width=".6"/><rect x="10.6" y="10.1" width="26.1" height="20.2" rx="1" fill="#b8d4ea"/><rect x="11.5" y="11" width="24.3" height="18.4" fill="url(#gsd)"/><g transform="translate(24.3 20.8) scale(1.08)"><g stroke="#fff" fill="none" stroke-linecap="round"><path d="M-5.8,6.4L1.7,-6.4" stroke-width="1.8"/><path d="M-1.7,-6.4L5.8,6.4" stroke-width="1.8"/><path d="M-7.2,1.8H7.2" stroke-width="1.5"/><path d="M-7.2,.8V2.8M7.2,.8V2.8" stroke-width=".9"/></g></g></svg><span>Desktop</span></div>
  <div class="row" style="top:41px"><svg width="48" height="41" viewBox="0 0 48 41" style="left:0;top:0"><defs><radialGradient id="gsw" cx=".4" cy=".22" r=".85"><stop offset="0" stop-color="#c6cad0"/><stop offset=".42" stop-color="#7d8188"/><stop offset="1" stop-color="#24272b"/></radialGradient></defs><circle cx="23.6" cy="20.5" r="13.1" fill="url(#gsw)"/><path d="M14,15c3,-1 5,1 4,4s-4,3-5.5,1zM27,11c3,0 6,2 7,5s-2,3-4,2s-4-4-3-7zM20,27c2,-2 6,-1 7,1s-1,4-4,4s-4-3-3-5z" fill="#fff" fill-opacity=".12"/><g transform="translate(23.6 19.9) scale(1.12)"><g stroke="#fff" fill="none" stroke-linecap="round"><path d="M-5.8,6.4L1.7,-6.4" stroke-width="1.8"/><path d="M-1.7,-6.4L5.8,6.4" stroke-width="1.8"/><path d="M-7.2,1.8H7.2" stroke-width="1.5"/><path d="M-7.2,.8V2.8M7.2,.8V2.8" stroke-width=".9"/></g></g></svg><span>Web</span></div>
  <div class="row" style="top:82px"><svg width="48" height="41" viewBox="0 0 48 41" style="left:0;top:0"><defs><linearGradient id="gsc" x1="0" y1="0" x2="0" y2="1"><stop offset="0" stop-color="#9c9c9c"/><stop offset="1" stop-color="#6c6c6c"/></linearGradient></defs><rect x="10.7" y="10.1" width="25.9" height="22.7" rx="1.6" fill="url(#gsc)"/><rect x="12.6" y="12.3" width="22.1" height="18.3" rx=".8" fill="#07140a"/><path d="M14.6,17.4L21.8,21.3L14.6,25.2" fill="none" stroke="#3fe53a" stroke-width="2.3"/><path d="M24,25.4H32.3" stroke="#3fe53a" stroke-width="2.2"/></svg><span>Console</span></div>
  <div class="row" style="top:123px"><svg width="48" height="41" viewBox="0 0 48 41" style="left:0;top:0"><rect x="16.7" y="9.2" width="14.2" height="24.6" rx="2.6" fill="#fdfdfd" stroke="#6a6a6a" stroke-width=".8"/><rect x="18.1" y="13.3" width="11.4" height="16.2" fill="#000"/><path d="M21.8,11.3H25.8" stroke="#9a9a9a" stroke-width=".8" stroke-linecap="round"/><circle cx="23.8" cy="31.6" r="1.2" fill="none" stroke="#8a8a8a" stroke-width=".6"/></svg><span>iOS</span></div>
  <div class="row" style="top:164px"><svg width="48" height="41" viewBox="0 0 48 41" style="left:0;top:0"><circle cx="23.7" cy="21.1" r="11.4" fill="#fcfcfc" stroke="#141414" stroke-width="1.7"/><circle cx="23.7" cy="12.3" r=".65" fill="#222"/><circle cx="28.1" cy="13.48" r=".65" fill="#222"/><circle cx="31.32" cy="16.7" r=".65" fill="#222"/><circle cx="32.5" cy="21.1" r=".65" fill="#222"/><circle cx="31.32" cy="25.5" r=".65" fill="#222"/><circle cx="28.1" cy="28.72" r=".65" fill="#222"/><circle cx="23.7" cy="29.9" r=".65" fill="#222"/><circle cx="19.3" cy="28.72" r=".65" fill="#222"/><circle cx="16.08" cy="25.5" r=".65" fill="#222"/><circle cx="14.9" cy="21.1" r=".65" fill="#222"/><circle cx="16.08" cy="16.7" r=".65" fill="#222"/><circle cx="19.3" cy="13.48" r=".65" fill="#222"/><path d="M23.7,21.1L19.4,13.9" stroke="#111" stroke-width="1.5" stroke-linecap="round"/><path d="M23.7,21.1L29.6,17.9" stroke="#111" stroke-width="1.1" stroke-linecap="round"/><path d="M24.6,20.2L17.7,27.6" stroke="#d6453c" stroke-width=".6"/><circle cx="23.7" cy="21.1" r="1" fill="#111"/></svg><span>Recent Projects</span></div>
  <div class="row" style="top:205px"><svg width="48" height="41" viewBox="0 0 48 41" style="left:0;top:0"><defs><linearGradient id="gst" x1="0" y1="0" x2="0" y2="1"><stop offset="0" stop-color="#f1f1f1"/><stop offset="1" stop-color="#dadada"/></linearGradient></defs><path d="M13.3,8.4H28.2L33.7,13.9V33.5H13.3z" fill="url(#gst)" stroke="#b4b4b4" stroke-width=".7"/><path d="M28.2,8.4V13.9H33.7z" fill="#fbfbfb" stroke="#b4b4b4" stroke-width=".6"/><path d="M15.3,14.5H31.7M15.3,18.5H31.7M15.3,22.5H31.7M15.3,26.5H31.7M15.3,30.5H31.7M17.5,12.5V31.8M21.5,12.5V31.8M25.5,12.5V31.8M29.5,14.5V31.8" stroke="#c6c9cf" stroke-width=".5"/><circle cx="23.5" cy="21.2" r="6.7" fill="#6aa740"/><circle cx="23.5" cy="21.2" r="5.2" fill="none" stroke="#8cc560" stroke-width="1.2" stroke-dasharray="1.2 1.1"/><rect x="22.3" y="20" width="2.4" height="2.4" fill="#e9f5dd"/></svg><span>Templates</span></div>
  <div class="row" style="top:246px"><svg width="48" height="41" viewBox="0 0 48 41" style="left:0;top:0"><defs><linearGradient id="gsf" x1="0" y1="0" x2="0" y2="1"><stop offset="0" stop-color="#ecdcae"/><stop offset="1" stop-color="#c6ae76"/></linearGradient></defs><path d="M11.6,13.8H35.7V30H11.6z" fill="#b59c68" stroke="#5f5240" stroke-width=".8"/><path d="M14.2,12.3L22.5,9.2L25.5,18.5L17,21.5z" fill="#f7f7f7" stroke="#7a7a7a" stroke-width=".6"/><path d="M22.3,11.8L32.3,14.6L30,22.5L20,19.8z" fill="#fbfbfb" stroke="#7a7a7a" stroke-width=".6"/><path d="M10.6,18.2H36.7L35.8,30.8C35.7,31.6 35.2,32.1 34.4,32.1H12.9C12.1,32.1 11.6,31.6 11.5,30.8z" fill="url(#gsf)" stroke="#5f5240" stroke-width=".8" stroke-linejoin="round"/></svg><span>Examples</span></div>
 </div>
 <div id="main">
  <div class="lbl" style="top:19px">Application Name:</div>
  <div class="lbl" style="top:48px">Company Name:</div>
  <div class="lbl" style="top:77px">Application Identifier:</div>
 </div>
 <div class="fld f" style="top:42.3px">test</div>
 <div class="fld" style="top:71.3px">My Company</div>
 <div class="fld" style="top:100.3px">com.mycompany.test</div>
 <div id="foot">
  <div class="btn" style="left:18px;width:146px">Open an Existing File...</div>
  <div class="btn" style="left:562px;width:66px">Cancel</div>
  <div class="btn ok" style="left:641px;width:66px">OK</div>
 </div>
</div>

<!-- DOCK -->
<div id="dock"></div>
<div id="dsep"></div>
<svg class="di" style="left:40.7px;top:616.5px;width:31px;height:31px" viewBox="0 0 32 32"><defs><linearGradient id="gfi" x1="0" y1="0" x2="0" y2="1"><stop offset="0" stop-color="#2fb3f6"/><stop offset="1" stop-color="#1b62df"/></linearGradient><linearGradient id="gfi2" x1="0" y1="0" x2="0" y2="1"><stop offset="0" stop-color="#f4f7fb"/><stop offset="1" stop-color="#dbe3ee"/></linearGradient><clipPath id="cfi"><rect width="32" height="32" rx="7.2"/></clipPath></defs><g clip-path="url(#cfi)"><rect width="32" height="32" fill="url(#gfi2)"/><path d="M0,0H18.3C15.8,5.5 14.3,11 14,17.3h3.6c0,5.2 .5,10 1.6,14.7H0z" fill="url(#gfi)"/><path d="M18.3,0C15.8,5.5 14.3,11 14,17.3h3.6c0,5.2 .5,10 1.6,14.7" fill="none" stroke="#27456f" stroke-opacity=".75" stroke-width=".5"/><path d="M8.8,9.6v2.6M23.3,9.6v2.6" stroke="#1b2b44" stroke-width="1.2" stroke-linecap="round"/><path d="M6.3,21.3c5.5,5.4 15,5.3 20,-.4" fill="none" stroke="#1b2b44" stroke-width="1" stroke-linecap="round"/></g></svg>
<svg class="di" style="left:81.4px;top:616.5px;width:31px;height:31px" viewBox="0 0 32 32"><rect width="32" height="32" rx="7.2" fill="#f0edea"/><rect x="5" y="5.2" width="6" height="6" rx="1.6" fill="#4ed03a"/><rect x="13" y="5.2" width="6" height="6" rx="1.6" fill="#f7bd1b"/><rect x="21" y="5.2" width="6" height="6" rx="1.6" fill="#f6931f"/><rect x="5" y="13.2" width="6" height="6" rx="1.6" fill="#e3212c"/><rect x="13" y="13.2" width="6" height="6" rx="1.6" fill="#9ea3a3"/><rect x="21" y="13.2" width="6" height="6" rx="1.6" fill="#f24c6b"/><rect x="5" y="21.2" width="6" height="6" rx="1.6" fill="#aa48e2"/><rect x="13" y="21.2" width="6" height="6" rx="1.6" fill="#2ba2f2"/><rect x="21" y="21.2" width="6" height="6" rx="1.6" fill="#37c9b2"/></svg>
<svg class="di" style="left:122px;top:616.5px;width:31px;height:31px" viewBox="0 0 32 32"><rect width="32" height="32" rx="7.2" fill="#f6f6f8"/><defs><linearGradient id="gsa" x1="0" y1="0" x2="0" y2="1"><stop offset="0" stop-color="#2cb6f7"/><stop offset="1" stop-color="#1b6de2"/></linearGradient></defs><circle cx="16" cy="16" r="12.7" fill="url(#gsa)"/><circle cx="16" cy="16" r="11.3" fill="none" stroke="#fff" stroke-opacity=".55" stroke-width="1.4" stroke-dasharray=".5 1.47"/><path d="M24.4,7.6L17.5,17.5L14.5,14.5z" fill="#f2453d"/><path d="M7.6,24.4L14.5,14.5L17.5,17.5z" fill="#f4f4f4"/></svg>
<svg class="di" style="left:162.7px;top:616.5px;width:31px;height:31px" viewBox="0 0 32 32"><defs><linearGradient id="gme" x1="0" y1="0" x2="0" y2="1"><stop offset="0" stop-color="#63e56d"/><stop offset="1" stop-color="#2abf3c"/></linearGradient><linearGradient id="gme2" x1="0" y1="0" x2="0" y2="1"><stop offset="0" stop-color="#ffffff"/><stop offset="1" stop-color="#dfeee0"/></linearGradient></defs><rect width="32" height="32" rx="7.2" fill="url(#gme)"/><path d="M16,6.3c6,0 10.7,3.9 10.7,8.7s-4.7,8.7-10.7,8.7c-1.3,0-2.6-.2-3.8-.5c-1.1,1-2.6,1.7-4.3,1.8c.9-.9 1.5-2 1.7-3.2C6.9,20.2 5.3,17.7 5.3,15C5.3,10.2 10,6.3 16,6.3z" fill="url(#gme2)"/></svg>
<svg class="di" style="left:203.4px;top:616.5px;width:31px;height:31px" viewBox="0 0 32 32"><defs><linearGradient id="gma" x1="0" y1="0" x2="0" y2="1"><stop offset="0" stop-color="#1b74f1"/><stop offset="1" stop-color="#40d0fc"/></linearGradient><linearGradient id="gma2" x1="0" y1="0" x2="0" y2="1"><stop offset="0" stop-color="#ffffff"/><stop offset="1" stop-color="#e4e8ee"/></linearGradient></defs><rect width="32" height="32" rx="7.2" fill="url(#gma)"/><rect x="4.8" y="9.3" width="22.4" height="14" rx="2" fill="url(#gma2)"/><path d="M5.3,10.2L16,18.2L26.7,10.2" fill="none" stroke="#b9bec8" stroke-width=".9"/><path d="M5.3,22.6L12.6,15.8M26.7,22.6L19.4,15.8" fill="none" stroke="#c9ced6" stroke-width=".7"/></svg>
<svg class="di" style="left:244.1px;top:616.5px;width:31px;height:31px" viewBox="0 0 32 32"><defs><clipPath id="cmp"><rect width="32" height="32" rx="7.2"/></clipPath></defs><g clip-path="url(#cmp)"><rect width="32" height="32" fill="#f3f1ea"/><rect x="0" y="2" width="5.3" height="16.5" fill="#f8d94f"/><rect x="0" y="18.5" width="4.6" height="14" fill="#f7bfd0"/><circle cx="32" cy="0" r="21.5" fill="#6ccf4c"/><circle cx="32" cy="0" r="16.8" fill="#fdfdfb"/><circle cx="32" cy="0" r="10.8" fill="#8de266"/><path d="M13.5,17.5L19.5,21L17.5,25H12.5z" fill="#f9dc55"/><rect x="11.5" y="25.5" width="6" height="6.5" fill="#f0ede6"/><rect x="5.3" y="20" width="5" height="12" fill="#fdfdfd"/><rect x="5.4" y="-1" width="4.8" height="19" fill="#1c86ea"/><circle cx="8" cy="19.3" r="5" fill="#fdfdfd"/><circle cx="8" cy="19.3" r="3.4" fill="#1f7ce6"/><path d="M18.2,21.5h10.8c.4,4.7-1.5,8-5.4,9.6c-3.9-1.6-5.8-4.9-5.4-9.6z" fill="#2b57c4" stroke="#fdfdfd" stroke-width=".6"/><path d="M18.2,21.5h10.8l-.1,2.3h-10.6z" fill="#e0474e"/><path d="M20.7,26.4h5.8" stroke="#e8eefc" stroke-width="1.6"/></g></svg>
<svg class="di" style="left:284.7px;top:616.5px;width:31px;height:31px" viewBox="0 0 32 32"><rect width="32" height="32" rx="7.2" fill="#fafafa"/><ellipse cx="16" cy="9.5" rx="4.7" ry="6.9" fill="#f89a1e" fill-opacity=".8" transform="rotate(0 16 16)"/><ellipse cx="16" cy="9.5" rx="4.7" ry="6.9" fill="#f4d02c" fill-opacity=".8" transform="rotate(45 16 16)"/><ellipse cx="16" cy="9.5" rx="4.7" ry="6.9" fill="#9bd046" fill-opacity=".8" transform="rotate(90 16 16)"/><ellipse cx="16" cy="9.5" rx="4.7" ry="6.9" fill="#4fc2a2" fill-opacity=".8" transform="rotate(135 16 16)"/><ellipse cx="16" cy="9.5" rx="4.7" ry="6.9" fill="#4a98e4" fill-opacity=".8" transform="rotate(180 16 16)"/><ellipse cx="16" cy="9.5" rx="4.7" ry="6.9" fill="#8a6fd6" fill-opacity=".8" transform="rotate(225 16 16)"/><ellipse cx="16" cy="9.5" rx="4.7" ry="6.9" fill="#d966a8" fill-opacity=".8" transform="rotate(270 16 16)"/><ellipse cx="16" cy="9.5" rx="4.7" ry="6.9" fill="#f2564c" fill-opacity=".8" transform="rotate(315 16 16)"/></svg>
<svg class="di" style="left:325.4px;top:616.5px;width:31px;height:31px" viewBox="0 0 32 32"><defs><linearGradient id="gft" x1="0" y1="0" x2="0" y2="1"><stop offset="0" stop-color="#62e56c"/><stop offset="1" stop-color="#27b73a"/></linearGradient><linearGradient id="gft2" x1="0" y1="0" x2="0" y2="1"><stop offset="0" stop-color="#ffffff"/><stop offset="1" stop-color="#d9ecd9"/></linearGradient></defs><rect width="32" height="32" rx="7.2" fill="url(#gft)"/><rect x="5" y="10.3" width="15.6" height="11.4" rx="2.8" fill="url(#gft2)"/><path d="M21.6,14.3L26,11.2c.6-.4 1.2-.1 1.2,.6v8.4c0,.7-.6,1-1.2,.6L21.6,17.7z" fill="#e6f3e6"/></svg>
<svg class="di" style="left:366.1px;top:616.5px;width:31px;height:31px" viewBox="0 0 32 32"><defs><clipPath id="ccal"><rect width="32" height="32" rx="7.2"/></clipPath></defs><g clip-path="url(#ccal)"><rect width="32" height="32" fill="#fbfbfb"/><rect width="32" height="10" fill="#f2484c"/></g><text x="16" y="8.2" text-anchor="middle" font-family="Liberation Sans,sans-serif" font-weight="bold" font-size="6.2" fill="#fff">JAN</text><text x="16" y="27.3" text-anchor="middle" font-family="Liberation Sans,sans-serif" font-size="18.5" fill="#3a3a3c" letter-spacing="-.6">16</text></svg>
<svg class="di" style="left:406.7px;top:616.5px;width:31px;height:31px" viewBox="0 0 32 32"><defs><linearGradient id="gco" x1="0" y1="0" x2="0" y2="1"><stop offset="0" stop-color="#bd8d52"/><stop offset="1" stop-color="#b28145"/></linearGradient></defs><rect x="29" y="9.5" width="3" height="4" rx="1" fill="#4fb7a8"/><rect x="29" y="14.5" width="3" height="4" rx="1" fill="#7fbf5a"/><rect x="29" y="19.5" width="3" height="4" rx="1" fill="#c9a24e"/><rect width="30.8" height="32" rx="7" fill="url(#gco)"/><circle cx="15.4" cy="15.5" r="8.6" fill="#a57a40"/><circle cx="15.4" cy="12.8" r="3.2" fill="#b98d55"/><path d="M9.5,21.5c.8-3.3 3-4.8 5.9-4.8s5.1,1.5 5.9,4.8c-1.5,1.6-3.6,2.6-5.9,2.6s-4.4-1-5.9-2.6z" fill="#b98d55"/></svg>
<svg class="di" style="left:447.4px;top:616.5px;width:31px;height:31px" viewBox="0 0 32 32"><rect width="32" height="32" rx="7.2" fill="#fcfcfc"/><circle cx="6.8" cy="8.3" r="2.5" fill="#3b7cf2"/><circle cx="6.8" cy="8.3" r="1.3" fill="none" stroke="#fff" stroke-opacity=".5" stroke-width=".5"/><path d="M12,8.3H27.5" stroke="#cfcfd2" stroke-width=".8"/><circle cx="6.8" cy="16" r="2.5" fill="#e8436c"/><circle cx="6.8" cy="16" r="1.3" fill="none" stroke="#fff" stroke-opacity=".5" stroke-width=".5"/><path d="M12,16H27.5" stroke="#cfcfd2" stroke-width=".8"/><circle cx="6.8" cy="23.7" r="2.5" fill="#f0a232"/><circle cx="6.8" cy="23.7" r="1.3" fill="none" stroke="#fff" stroke-opacity=".5" stroke-width=".5"/><path d="M12,23.7H27.5" stroke="#cfcfd2" stroke-width=".8"/></svg>
<svg class="di" style="left:488.1px;top:616.5px;width:31px;height:31px" viewBox="0 0 32 32"><defs><clipPath id="cno"><rect width="32" height="32" rx="7.2"/></clipPath><linearGradient id="gno" x1="0" y1="0" x2="0" y2="1"><stop offset="0" stop-color="#fcdb52"/><stop offset="1" stop-color="#f6c61f"/></linearGradient><linearGradient id="gno2" x1="0" y1="0" x2="0" y2="1"><stop offset="0" stop-color="#fbfaf6"/><stop offset="1" stop-color="#e6e2d8"/></linearGradient></defs><g clip-path="url(#cno)"><rect width="32" height="32" fill="url(#gno2)"/><rect width="32" height="8.4" fill="url(#gno)"/><path d="M0,9H32" stroke="#d8d4c8" stroke-width=".6"/><path d="M0,15H32M0,21H32" stroke="#dcd8cc" stroke-width=".6" stroke-dasharray=".8 .8"/></g></svg>
<svg class="di" style="left:528.7px;top:616.5px;width:31px;height:31px" viewBox="0 0 32 32"><defs><linearGradient id="gtv" x1="0" y1="0" x2="0" y2="1"><stop offset="0" stop-color="#2a3032"/><stop offset="1" stop-color="#17191b"/></linearGradient></defs><rect width="32" height="32" rx="7.2" fill="url(#gtv)"/><path transform="translate(3.6 9.4) scale(.84)" fill="#fff" d="M9.1,0.2c0.1,0.8-0.2,1.6-0.7,2.2C7.9,3,7.1,3.4,6.4,3.4C6.3,2.6,6.7,1.8,7.1,1.3C7.6,0.7,8.5,0.3,9.1,0.2z M11.7,5.1c-0.1,0.1-1.4,0.8-1.4,2.4c0,1.9,1.7,2.5,1.7,2.5c0,0-0.3,0.9-0.9,1.8c-0.5,0.8-1.1,1.6-2,1.6c-0.9,0-1.1-0.5-2.1-0.5c-1,0-1.3,0.5-2.1,0.5c-0.8,0-1.4-0.7-2-1.6C2,10.7,1.4,9,1.4,7.4c0-2.6,1.7-3.9,3.3-3.9c0.9,0,1.6,0.6,2.1,0.6c0.5,0,1.3-0.6,2.3-0.6C9.5,3.5,10.8,3.5,11.7,5.1z"/><text x="20.8" y="21" text-anchor="middle" font-family="Liberation Sans,sans-serif" font-size="12.5" fill="#fff" letter-spacing="-.2">tv</text></svg>
<svg class="di" style="left:569.4px;top:616.5px;width:31px;height:31px" viewBox="0 0 32 32"><defs><linearGradient id="gmu" x1="0" y1="0" x2="0" y2="1"><stop offset="0" stop-color="#fd657c"/><stop offset="1" stop-color="#f3263d"/></linearGradient></defs><rect width="32" height="32" rx="7.2" fill="url(#gmu)"/><path d="M13,9.2L23.8,6.7V20.6a2.9,2.4 0 1 1 -1.8,-2.25V10.9L14.8,12.6V22.7a2.9,2.4 0 1 1 -1.8,-2.25z" fill="#fff"/></svg>
<svg class="di" style="left:610.1px;top:616.5px;width:31px;height:31px" viewBox="0 0 32 32"><defs><linearGradient id="gpo" x1="0" y1="0" x2="0" y2="1"><stop offset="0" stop-color="#cd6ef4"/><stop offset="1" stop-color="#7620c2"/></linearGradient></defs><rect width="32" height="32" rx="7.2" fill="url(#gpo)"/><circle cx="16" cy="13.6" r="2.6" fill="#fff"/><path d="M13.7,19.3c0-1.4 1-2.1 2.3-2.1s2.3,.7 2.3,2.1l-.7,6.2c-.1,.9-.7,1.4-1.6,1.4s-1.5-.5-1.6-1.4z" fill="#fff"/><path d="M11.4,18.6a6.2,6.2 0 1 1 9.2,0" fill="none" stroke="#fff" stroke-width="1.5" stroke-linecap="round"/><path d="M9.2,23.2a10.4,10.4 0 1 1 13.6,0" fill="none" stroke="#fff" stroke-width="1.5" stroke-linecap="round"/></svg>
<svg class="di" style="left:650.8px;top:616.5px;width:31px;height:31px" viewBox="0 0 32 32"><rect width="32" height="32" rx="7.2" fill="#fdfdfd"/><defs><clipPath id="cne"><rect x="6.8" y="6.8" width="18.4" height="18.4" rx="1.5"/></clipPath></defs><g clip-path="url(#cne)"><rect x="6.8" y="6.8" width="18.4" height="18.4" fill="#fff"/><path d="M6.8,6.8H14L25.2,18V25.2H18L6.8,14z" fill="#ee3456"/><path d="M6.8,17.3L14.7,25.2H6.8z" fill="#f0506c"/><path d="M25.2,14.7L17.3,6.8H25.2z" fill="#f0506c"/><path d="M6.8,15.5L16.5,25.2M15.5,6.8L25.2,16.5" stroke="#fff" stroke-width="1.7"/></g></svg>
<svg class="di" style="left:691.4px;top:616.5px;width:31px;height:31px" viewBox="0 0 32 32"><defs><linearGradient id="gas" x1="0" y1="0" x2="0" y2="1"><stop offset="0" stop-color="#22b8fa"/><stop offset="1" stop-color="#1965ee"/></linearGradient></defs><rect width="32" height="32" rx="7.2" fill="url(#gas)"/><g stroke="#fff" stroke-width="2.5" stroke-linecap="round" fill="none"><path d="M10.3,21.8L17.7,8.8"/><path d="M14.3,8.8L21.7,21.8"/><path d="M6.3,19.3H16.7M21.3,19.3H25.7"/><path d="M8.5,24.3L9.3,22.9"/><path d="M22.7,22.9L23.5,24.3"/></g></svg>
<svg class="di" style="left:732.1px;top:616.5px;width:31px;height:31px" viewBox="0 0 32 32"><rect x="1.3" y="1.6" width="29.4" height="28.8" rx="6" fill="#4c4c4e"/><rect x="2.5" y="2.8" width="27" height="26.4" rx="5" fill="#1b1b1c"/><path d="M5.8,7L9,9.2L5.8,11.4" fill="none" stroke="#f2f2f2" stroke-width="1.3"/><path d="M10,12H14.5" stroke="#f2f2f2" stroke-width="1.3"/></svg>
<svg class="di" style="left:772.8px;top:616.5px;width:31px;height:31px" viewBox="0 0 32 32"><defs><linearGradient id="gsp" x1="0" y1="0" x2="0" y2="1"><stop offset="0" stop-color="#ececee"/><stop offset="1" stop-color="#8f8f92"/></linearGradient></defs><rect width="32" height="32" rx="7.2" fill="url(#gsp)"/><circle cx="16" cy="16" r="12.8" fill="#3a3a3c"/><circle cx="16" cy="16" r="10.4" fill="#7d7d80"/><circle cx="16" cy="16" r="8.6" fill="#2f2f31"/><circle cx="16" cy="16" r="7" fill="#58585b"/><g stroke="#2f2f31" stroke-width="1.8"><path d="M16,16V7.5M16,16L23.4,20.3M16,16L8.6,20.3"/></g><g stroke="#97979a" stroke-width="1.3"><path d="M16,16V8M16,16L23,20M16,16L9,20"/></g><circle cx="16" cy="16" r="2" fill="#9a9a9d"/></svg>
<svg class="di" style="left:853.3px;top:616.8px;width:30.4px;height:30.4px" viewBox="0 0 32 32"><rect width="32" height="32" rx="6.8" fill="#7cc033"/><defs><linearGradient id="gxo" x1="0" y1="0" x2="0" y2="1"><stop offset="0" stop-color="#8ccd3f"/><stop offset="1" stop-color="#6fb42a"/></linearGradient></defs><rect width="32" height="32" rx="6.8" fill="url(#gxo)"/><g stroke="#e9ffd4" stroke-width="2" fill="none"><circle cx="16" cy="16" r="12.3"/><path d="M7.3,7.3L24.7,24.7M24.7,7.3L7.3,24.7"/></g><rect x="12.8" y="12.8" width="6.4" height="6.4" fill="#fff" rx=".5"/></svg>
<svg class="di" style="left:810.8px;top:614.8px;width:34.8px;height:34.8px" viewBox="0 0 35 35"><circle cx="17.5" cy="17.5" r="17.2" fill="#fff"/><circle cx="17.5" cy="17.5" r="16" fill="#3f97db"/><defs><clipPath id="ccl"><circle cx="17.5" cy="17.5" r="16"/></clipPath></defs><g clip-path="url(#ccl)"><rect x="0" y="23" width="35" height="14" fill="#4ea3e2"/><path d="M0,22.6H35" stroke="#fff" stroke-width="1.5"/><path d="M4.2,22.6L10.9,10.6L17.4,22.6M14.2,16.4L20.1,5.6L30.8,22.6" fill="none" stroke="#fff" stroke-width="1.5" stroke-linejoin="miter"/></g></svg>
<svg class="di" style="left:909.6px;top:617.6px;width:36px;height:30px" viewBox="0 0 36 30"><defs><linearGradient id="gdl" x1="0" y1="0" x2="0" y2="1"><stop offset="0" stop-color="#7acbf8"/><stop offset="1" stop-color="#62bbf3"/></linearGradient></defs><path d="M0,3.5C0,1.8 1.2,.8 2.8,.8H10.5C11.8,.8 12.5,1.3 13.3,2.2L14.6,3.6H33.2C34.8,3.6 36,4.7 36,6.4V9H0z" fill="#3c9ee2"/><rect x="0" y="6" width="36" height="24" rx="2.6" fill="url(#gdl)"/><circle cx="18" cy="17.5" r="6.3" fill="#3f9fe3"/><path d="M18,13.5V20.8M15,18L18,21L21,18" fill="none" stroke="#7ccbf8" stroke-width="1.4" stroke-linecap="round" stroke-linejoin="round"/></svg>
<svg class="di" style="left:954.4px;top:616.2px;width:27.6px;height:33px" viewBox="0 0 27.6 33"><defs><linearGradient id="gtr" x1="0" y1="0" x2="1" y2="0"><stop offset="0" stop-color="#ededed"/><stop offset=".5" stop-color="#f7f7f7"/><stop offset="1" stop-color="#e4e4e4"/></linearGradient></defs><path d="M.5,3.2L4,30.3C4.2,31.8 8.5,32.8 13.8,32.8S23.4,31.8 23.6,30.3L27.1,3.2z" fill="url(#gtr)" fill-opacity=".82"/><ellipse cx="13.8" cy="3.2" rx="13.3" ry="2.9" fill="#f3f3f3" stroke="#fbfbfb" stroke-width=".8"/><ellipse cx="13.8" cy="3.5" rx="11.8" ry="2" fill="#dedede" fill-opacity=".7"/></svg>
<div class="dot" style="left:54.5px"></div>
<div class="dot" style="left:746px"></div>
<div class="dot" style="left:867px"></div>
</body>
</html>
